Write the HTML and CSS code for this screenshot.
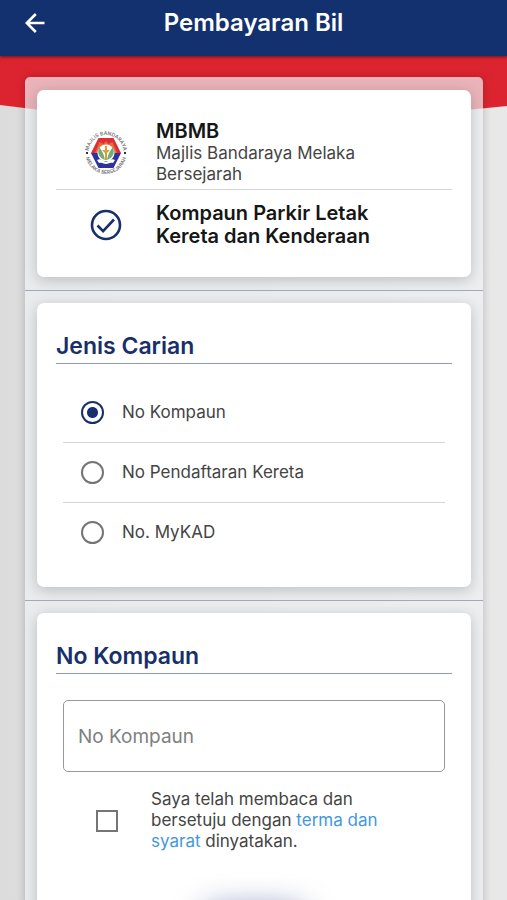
FILE: index.html
```html
<!DOCTYPE html>
<html lang="ms">
<head>
    <meta charset="UTF-8">
    <meta name="viewport" content="width=device-width, initial-scale=1.0">
    <title>Pembayaran Bil</title>
    <link rel="stylesheet" href="styles.css">
</head>
<body>
    <header class="app-bar">
        <button class="back-btn" type="button" aria-label="Kembali">
            <svg width="20" height="20" viewBox="0 0 20 20" fill="none" stroke="#fff" stroke-width="2.6">
                <path d="M19.5 10H2M10.8 1L1.8 10l9 9"/>
            </svg>
        </button>
        <h1>Pembayaran Bil</h1>
    </header>

    <main class="page">
        <form class="panel">
            <section class="panel-section">
                <div class="card">
                    <div class="bill-row">
                        <svg class="crest" width="44" height="46" viewBox="0 0 44 46">
                            <defs>
                                <path id="ring-top" d="M4.5 23a17.5 18 0 0 1 35 0"/>
                                <path id="ring-bottom" d="M1.5 23a20.5 21 0 0 0 41 0"/>
                            </defs>
                            <text class="crest-text"><textPath href="#ring-top" startOffset="50%">MAJLIS BANDARAYA</textPath></text>
                            <text class="crest-text"><textPath href="#ring-bottom" startOffset="50%">MELAKA BERSEJARAH</textPath></text>
                            <path d="M2 22h2v2H2zM40 22h2v2h-2z" fill="#333"/>
                            <path d="M14.500 8h15L37 23H7z" fill="#dc2f35"/>
                            <path d="M7 23h30l-7.500 15h-15z" fill="#30329b"/>
                            <path d="M15.500 12l4 2 2.500-3 2.500 3 4-2 4.500 11H11z" fill="#f0693c"/>
                            <circle cx="22" cy="23" r="8.500" fill="#fff"/>
                            <path d="M15 17c-2 6 0 11 6 13-1-5-2-8-6-13zM29 17c2 6 0 11-6 13 1-5 2-8 6-13z" fill="#6fae78"/>
                            <path d="M21 16h2v4h3l-3 3v7h-2v-7l-3-3h3z" fill="#d9a02e"/>
                            <path d="M13 30c4-2 6 1 9 2 3-1 5-4 9-2l-2 3c-3-1-5 1-7 1s-4-2-7-1z" fill="#fff"/>
                        </svg>
                        <div class="bill-text">
                            <h2 class="bill-name">MBMB</h2>
                            <p>Majlis Bandaraya Melaka Bersejarah</p>
                        </div>
                    </div>
                    <div class="bill-row">
                        <svg width="32" height="32" viewBox="0 0 32 32" fill="none" stroke="#15306b" stroke-width="2.600">
                            <circle cx="16" cy="16" r="14"/>
                            <path d="M7.500 16.500l5.600 5.600L24 10.500"/>
                        </svg>
                        <div class="bill-text">
                            <h2 class="bill-name">Kompaun Parkir Letak Kereta dan Kenderaan</h2>
                        </div>
                    </div>
                </div>
            </section>

            <section class="panel-section">
                <div class="card">
                    <h2 class="card-title">Jenis Carian</h2>
                    <div class="options">
                        <label class="option"><input type="radio" name="carian" checked>No Kompaun</label>
                        <label class="option"><input type="radio" name="carian">No Pendaftaran Kereta</label>
                        <label class="option"><input type="radio" name="carian">No. MyKAD</label>
                    </div>
                </div>
            </section>

            <section class="panel-section">
                <div class="card">
                    <h2 class="card-title"><label for="kompaun">No Kompaun</label></h2>
                    <input class="text-box" id="kompaun" type="text" placeholder="No Kompaun">
                    <div class="terms">
                        <input id="setuju" type="checkbox">
                        <label for="setuju">Saya telah membaca dan bersetuju dengan <a href="#terma">terma dan syarat</a> dinyatakan.</label>
                    </div>
                    <button class="submit-btn" type="submit" aria-label="Hantar"></button>
                </div>
            </section>
        </form>
    </main>
</body>
</html>
```
FILE: styles.css
```css
* {
    box-sizing: border-box;
}
body {
    margin: 0;
    height: 100vh;
    display: flex;
    flex-direction: column;
    overflow: hidden;
    font-family: Inter, "Liberation Sans", sans-serif;
    font-size: 17px;
    line-height: 21px;
    color: #444;
    background: linear-gradient(90deg, #dcdcdc, #e8e8e8);
}
h1, h2, p {
    margin: 0;
}

/* header */
.app-bar {
    display: grid;
    grid-template-columns: 48px 1fr 48px;
    align-items: center;
    padding: 8px 11px 18px;
    background: #14316f;
    box-shadow: 0 1px 3px rgba(0, 0, 0, 0.5);
    z-index: 1;
}
.app-bar h1 {
    text-align: center;
    font-size: 24px;
    font-weight: 600;
    line-height: 30px;
    color: #fff;
}
.back-btn {
    display: flex;
    justify-content: center;
    padding: 0;
    border: none;
    background: none;
    cursor: pointer;
}

.page {
    flex: 1;
    min-height: 0;
    position: relative;
    overflow-y: auto;
    scrollbar-width: none;
    padding: 21px 24px 24px 25px;
}
/* red banner behind the panel */
.page::before {
    content: "";
    position: absolute;
    top: 0;
    left: 0;
    right: 0;
    height: 60px;
    background: #dc2430;
    clip-path: polygon(0 0, 100% 0, 100% 50px, 92% 54px, 50% 55px, 8% 54px, 0 49px);
}
.panel {
    position: relative;
    border-radius: 5px;
    background: rgba(238, 241, 244, 0.7);
    box-shadow: 0 0 8px rgba(0, 0, 0, 0.2);
}
.panel-section {
    padding: 13px 12px;
}
.panel-section + .panel-section {
    padding-top: 12px;
    border-top: 1px solid #a2a8bb;
}
.card {
    padding: 30px 19px 25px;
    border-radius: 7px;
    background: #fff;
    box-shadow: 0 3px 14px rgba(0, 0, 0, 0.2);
}

/* bill details */
.bill-row {
    display: grid;
    grid-template-columns: 100px 1fr;
    align-items: center;
    padding-bottom: 4px;
}
.bill-row + .bill-row {
    padding-top: 12px;
    border-top: 1px solid #d5d5d5;
}
.bill-row > svg {
    justify-self: center;
}
.bill-text {
    padding-right: 50px;
}
.bill-name {
    font-size: 20px;
    font-weight: 600;
    line-height: 23px;
    color: #161616;
}
.crest-text {
    font-size: 5px;
    font-weight: 600;
    text-anchor: middle;
    fill: #777;
}

.card-title {
    padding-bottom: 4px;
    border-bottom: 1px solid #8f9abf;
    font-size: 23px;
    font-weight: 600;
    line-height: 26px;
    color: #192f6b;
}

/* search type */
.options {
    margin: 18px 7px 0;
}
.option {
    display: flex;
    align-items: center;
    gap: 18px;
    height: 60px;
    padding-left: 18px;
    cursor: pointer;
}
.option + .option {
    border-top: 1px solid #d5d5d5;
}
.option input {
    appearance: none;
    width: 23px;
    height: 23px;
    margin: 0;
    border: 2px solid #757575;
    border-radius: 50%;
}
.option input:checked {
    border-color: #192f6b;
    background: radial-gradient(circle, #192f6b 5px, transparent 6px);
}

.text-box {
    display: block;
    width: calc(100% - 14px);
    height: 72px;
    margin: 26px 7px 0;
    padding: 0 14px;
    border: 1px solid #999;
    border-radius: 5px;
    background: #fff;
    font: inherit;
    font-size: 19px;
}
.text-box::placeholder {
    color: #808080;
}
.terms {
    display: grid;
    grid-template-columns: 22px 1fr;
    align-items: center;
    gap: 33px;
    margin-top: 17px;
    padding: 0 50px 0 40px;
}
.terms input {
    appearance: none;
    width: 22px;
    height: 22px;
    margin: 0;
    border: 2px solid #757575;
}
.terms input:checked {
    background: #192f6b;
}
.terms a {
    color: #4298dd;
    text-decoration: none;
}
.submit-btn {
    display: block;
    width: 110px;
    height: 48px;
    margin: 56px auto 0;
    border: none;
    border-radius: 24px;
    background: #14316f;
    box-shadow: 0 0 30px rgba(20, 35, 120, 0.5);
}
```
